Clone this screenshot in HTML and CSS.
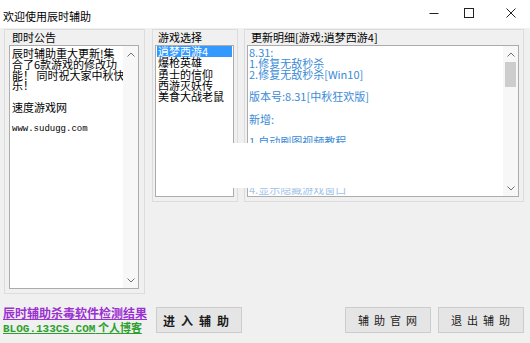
FILE: index.html
```html
<!DOCTYPE html>
<html lang="zh-CN">
<head>
<meta charset="utf-8">
<title>欢迎使用辰时辅助</title>
<link rel="stylesheet" href="styles.css">
</head>
<body>
<div class="window">
  <header class="titlebar">
    <div class="title">欢迎使用辰时辅助</div>
    <div class="caption">
      <svg class="cap cap-min" width="10" height="10" viewBox="0 0 10 10"><path d="M0.5 5.5H9.5" stroke="#222" stroke-width="1" fill="none"/></svg>
      <svg class="cap cap-max" width="10" height="10" viewBox="0 0 10 10"><rect x="0.5" y="0.5" width="9" height="9" stroke="#222" stroke-width="1" fill="none"/></svg>
      <svg class="cap cap-close" width="10" height="10" viewBox="0 0 10 10"><path d="M0.5 0.5L9.5 9.5M9.5 0.5L0.5 9.5" stroke="#222" stroke-width="1" fill="none"/></svg>
    </div>
  </header>

  <main class="main">
    <section class="group group-notice">
      <div class="group-label">即时公告</div>
      <div class="textbox">
        <div class="textbox-content notice">
          <div class="line">辰时辅助重大更新!集</div>
          <div class="line">合了6款游戏的修改功</div>
          <div class="line">能！ 同时祝大家中秋快</div>
          <div class="line">乐！</div>
          <div class="line">&nbsp;</div>
          <div class="line">速度游戏网</div>
          <div class="line">&nbsp;</div>
          <div class="line mono">www.sudugg.com</div>
        </div>
        <div class="scrollbar">
          <span class="arrow"><svg width="8" height="5" viewBox="0 0 8 5"><path d="M0.5 4.5L4 1L7.5 4.5" stroke="#707070" fill="none"/></svg></span>
          <span class="track"></span>
          <span class="arrow"><svg width="8" height="5" viewBox="0 0 8 5"><path d="M0.5 0.5L4 4L7.5 0.5" stroke="#707070" fill="none"/></svg></span>
        </div>
      </div>
    </section>

    <section class="group group-games">
      <div class="group-label">游戏选择</div>
      <div class="listbox">
        <div class="item selected">逍梦西游4</div>
        <div class="item">爆枪英雄</div>
        <div class="item">勇士的信仰</div>
        <div class="item">西游灭妖传</div>
        <div class="item">美食大战老鼠</div>
      </div>
    </section>

    <section class="group group-log">
      <div class="group-label">更新明细[游戏:逍梦西游4]</div>
      <div class="textbox">
        <div class="textbox-content changelog">
          <div class="line">8.31:</div>
          <div class="line">1.修复无敌秒杀</div>
          <div class="line">2.修复无敌秒杀[Win10]</div>
          <div class="line">&nbsp;</div>
          <div class="line">版本号:8.31[中秋狂欢版]</div>
          <div class="line">&nbsp;</div>
          <div class="line">新增:</div>
          <div class="line">&nbsp;</div>
          <div class="line">1.自动刷图视频教程</div>
          <div class="line">2.一键秒杀全屏怪物</div>
          <div class="line">3.无限血蓝不掉线</div>
          <div class="line late">4.显示隐藏游戏窗口</div>
        </div>
        <div class="scrollbar">
          <span class="arrow"><svg width="8" height="5" viewBox="0 0 8 5"><path d="M0.5 4.5L4 1L7.5 4.5" stroke="#707070" fill="none"/></svg></span>
          <span class="track"><span class="thumb"></span></span>
          <span class="arrow"><svg width="8" height="5" viewBox="0 0 8 5"><path d="M0.5 0.5L4 4L7.5 0.5" stroke="#707070" fill="none"/></svg></span>
        </div>
      </div>
    </section>
  </main>

  <footer class="bottom">
    <div class="links">
      <a class="link link-scan" href="#">辰时辅助杀毒软件检测结果</a>
      <a class="link link-blog" href="#"><span class="mono-bold">BLOG.133CS.COM</span> 个人博客</a>
    </div>
    <button class="btn btn-enter">进入辅助</button>
    <button class="btn btn-site">辅助官网</button>
    <button class="btn btn-exit">退出辅助</button>
  </footer>

  <div class="glitch"></div>
</div>
</body>
</html>
```

FILE: styles.css
```css
* { box-sizing: border-box; }

html, body {
  margin: 0;
  padding: 0;
}

body {
  background: #f0f0f0;
  font-family: "Noto Sans CJK SC", "Noto Sans", sans-serif;
  color: #000;
}

.window {
  position: relative;
  width: 530px;
  height: 343px;
  overflow: hidden;
  background: #f0f0f0;
}

/* ---------- title bar ---------- */
.titlebar {
  height: 28px;
  background: #ffffff;
  display: flex;
  justify-content: space-between;
  align-items: flex-start;
}

.title {
  font-size: 11px;
  line-height: 11px;
  padding: 11px 0 0 3px;
  color: #000;
  white-space: nowrap;
}

.caption {
  display: flex;
  align-items: flex-start;
  padding: 8px 14px 0 0;
}

.cap { display: block; }
.cap-min { margin-right: 25px; }
.cap-max { margin-right: 32px; }

/* ---------- groups ---------- */
.main {
  display: flex;
  align-items: flex-start;
  padding: 1px 0 0 4px;
}

.group {
  display: flex;
  flex-direction: column;
  border: 1px solid #dcdcdc;
}

.group-label {
  font-size: 11px;
  line-height: 15px;
  height: 15px;
  white-space: nowrap;
  padding-left: 5px;
}

.group-notice {
  width: 141px;
  height: 265px;
  margin-right: 7px;
  padding: 0 5px 4px 4px;
}
.group-notice .group-label { padding-left: 3px; }

.group-games {
  width: 86px;
  height: 173px;
  margin-right: 6px;
  padding: 0 3px 4px 2px;
}
.group-games .group-label { padding-left: 3px; }

.group-log {
  width: 280px;
  height: 173px;
  padding: 0 4px 4px 2px;
}
.group-log .group-label { padding-left: 4px; }

/* ---------- text boxes ---------- */
.textbox {
  flex: 1;
  display: flex;
  border: 1px solid #acacac;
  background: #ffffff;
  overflow: hidden;
}

.textbox-content {
  flex: 1;
  overflow: hidden;
  font-size: 11px;
  white-space: nowrap;
}

.notice {
  padding: 2px 0 0 2px;
  line-height: 10.8px;
}

.mono {
  font-family: "Liberation Mono", "DejaVu Sans Mono", monospace;
  font-size: 9px;
}

.changelog {
  padding: 1px 0 0 1px;
  line-height: 11.1px;
  color: #3a8bd6;
}

.changelog .late {
  margin-top: 15px;
  color: #9fc3e8;
}

.scrollbar {
  width: 15px;
  display: flex;
  flex-direction: column;
  background: #f7f7f7;
}

.arrow {
  height: 16px;
  display: flex;
  align-items: center;
  justify-content: center;
}
.arrow svg { display: block; }

.track {
  flex: 1;
  display: flex;
  flex-direction: column;
  align-items: center;
}

.thumb {
  width: 11px;
  height: 25px;
  background: #cdcdcd;
}

/* ---------- list box ---------- */
.listbox {
  flex: 1;
  border: 1px solid #acacac;
  background: #ffffff;
  padding: 0 1px 0 1px;
  font-size: 11px;
  line-height: 11.25px;
}

.item {
  padding-left: 1px;
  white-space: nowrap;
}

.item.selected {
  background: #3399ff;
  color: #ffffff;
}

/* ---------- bottom bar ---------- */
.bottom {
  display: flex;
  align-items: flex-start;
  padding: 13px 6px 0 3px;
}

.links {
  width: 153px;
  margin-top: -2px;
  display: flex;
  flex-direction: column;
}

.link {
  display: block;
  font-size: 12px;
  line-height: 15px;
  font-weight: bold;
  text-decoration: underline;
  white-space: nowrap;
}

.link-scan { color: #9b30d0; }

.link-blog {
  color: #2ca02c;
  font-size: 11px;
}

.mono-bold {
  font-family: "Liberation Mono", "DejaVu Sans Mono", monospace;
  font-size: 11px;
  font-weight: bold;
}

.btn {
  width: 86px;
  height: 26px;
  border: 1px solid #cccccc;
  background: #e5e5e5;
  font-family: "Noto Sans CJK SC", "Noto Sans", sans-serif;
  color: #1a1a1a;
  display: flex;
  align-items: center;
  justify-content: center;
  padding: 0;
  white-space: nowrap;
}

.btn-enter {
  font-size: 12px;
  font-weight: bold;
  letter-spacing: 6px;
}

.btn-site,
.btn-exit {
  font-size: 11px;
  letter-spacing: 5px;
  padding-left: 4px;
}

.btn-site { margin-left: auto; }
.btn-exit { margin-left: 7px; }

/* white rendering patch seen over the lists */
.glitch {
  position: absolute;
  left: 158px;
  top: 143px;
  width: 300px;
  height: 45px;
  background: #ffffff;
}
```
